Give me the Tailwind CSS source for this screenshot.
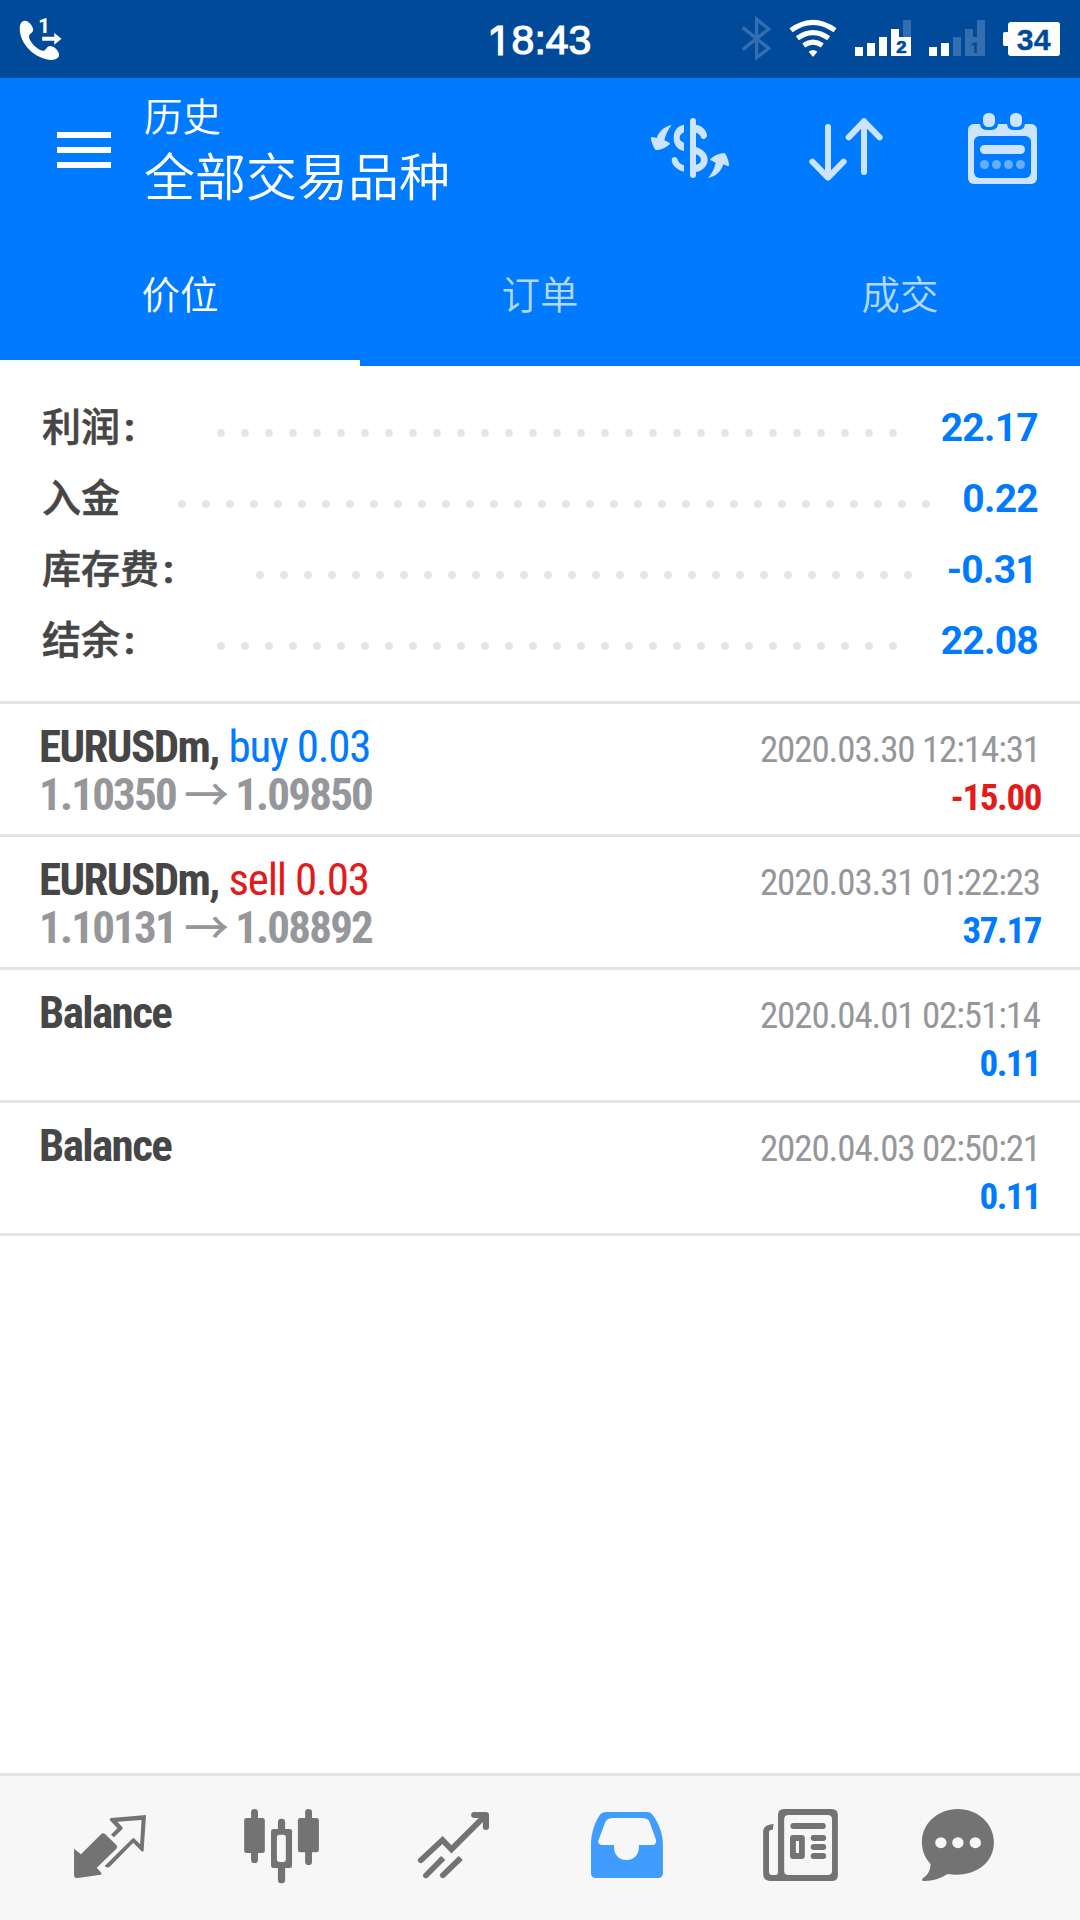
<!DOCTYPE html>
<html lang="zh-CN">
<head>
<meta charset="utf-8">
<title>历史</title>
<script src="https://cdn.jsdelivr.net/npm/@tailwindcss/browser@4"></script>
</head>
<body class="bg-white">
<div class="flex h-[1920px] w-[1080px] flex-col overflow-hidden bg-white font-['Roboto','Noto_Sans_CJK_SC',sans-serif] text-[#464646]">

  <!-- Status bar -->
  <header class="grid h-[78px] grid-cols-3 items-center bg-[#004a99] text-white">
    <svg class="ml-[18px] h-[48px] w-[48px]" viewBox="52 42 139 144" preserveAspectRatio="none" fill="#fff">
      <path d="M72 59C61 60 57 70 57 84C58 130 100 172 146 177C160 177 170 172 171 162C171 150 158 137 147 135C135 134 135 146 127 149C112 152 82 120 84 105C86 97 96 96 96 85C95 74 82 59 72 59Z"/>
      <path d="M122 107H157V96L178 113L157 131V119H122Z"/>
      <text x="111" y="96" font-family="Roboto" font-weight="800" font-size="59">1</text>
    </svg>
    <div class="flex justify-center pt-[3px] font-['Liberation_Sans',sans-serif] text-[41px] leading-none [-webkit-text-stroke:1.2px_#fff]"><span class="w-[23px] pl-px font-['Inter',sans-serif] text-[40px] leading-[41px]">1</span><span>8:43</span></div>
    <svg class="h-[78px] w-[360px]" viewBox="60 0 1080 234" fill="#fff">
      <path d="M128 82L206 145L170 173V58L206 87L128 149" fill="none" stroke="#336eae" stroke-width="10"/>
      <g fill="none" stroke="#fff" stroke-width="15">
        <path d="M273 91Q339 43 405 91"/>
        <path d="M292 115Q339 81 386 115"/>
        <path d="M311 136Q339 117 367 136"/>
      </g>
      <path d="M326 155Q339 145 352 155L341 169Q339 171 337 169Z"/>
      <path d="M609 60H633V111H609Z" fill="#336eae"/>
      <path d="M465 141H489V168H465ZM501 129H525V168H501ZM537 111H561V168H537ZM573 87H597V111H633V168H573Z"/>
      <text x="604" y="159" text-anchor="middle" fill="#004a99" stroke="#004a99" stroke-width="2" font-family="Liberation Sans" font-weight="700" font-size="47" textLength="31" lengthAdjust="spacingAndGlyphs">2</text>
      <path d="M687 141H711V168H687ZM723 129H747V168H723Z"/>
      <path d="M759 111H783V168H759ZM795 87H819V111H831V60H855V168H795Z" fill="#336eae"/>
      <text x="825" y="159" text-anchor="middle" fill="#004a99" font-family="Roboto" font-weight="800" font-size="46">1</text>
      <path d="M932 66H1072Q1080 66 1080 74V160Q1080 168 1072 168H932Q924 167 924 158V138H914Q909 138 909 133V101Q909 96 914 96H924V76Q924 67 932 66Z"/>
      <text x="1001" y="149" text-anchor="middle" fill="#004a99" stroke="#004a99" stroke-width="1" font-family="Liberation Sans" font-weight="700" font-size="87" textLength="101" lengthAdjust="spacingAndGlyphs">34</text>
    </svg>
  </header>

  <!-- App bar -->
  <section class="flex h-[288px] flex-col bg-[#007aff] text-white">
    <div class="flex h-[144px] shrink-0">
      <div class="mt-[54px] ml-[57px] flex h-[36px] w-[54px] flex-col justify-between">
        <i class="block h-[6px] bg-white"></i><i class="block h-[6px] bg-white"></i><i class="block h-[6px] bg-white"></i>
      </div>
      <div class="ml-[33px] pt-[12px] font-['Noto_Sans_CJK_SC',sans-serif] font-[350]">
        <div class="text-[38.5px] leading-[48px]">历史</div>
        <div class="text-[51px] leading-[72px]">全部交易品种</div>
      </div>
      <svg class="mt-[32px] mr-[40px] ml-auto h-[80px] w-[400px]" viewBox="60 60 1200 240" fill="#cce4ff">
        <rect x="210" y="84" width="18" height="180" rx="9"/>
        <path d="M192 104C170 108 161 125 161 143C161 162 170 178 192 183V158C183 154 179 150 179 143C179 136 184 131 192 127Z"/>
        <path d="M192 245C172 241 156 226 155 211C155 199 171 198 173 209C175 217 183 223 192 226Z"/>
        <path d="M228 104C246 107 260 120 261 136C261 148 245 151 243 141C241 135 236 131 228 128Z"/>
        <path d="M228 171C250 178 263 192 263 209C263 228 248 242 228 246V224C238 222 243 217 243 210C243 202 237 197 228 193Z"/>
        <path d="M155 105C132 110 117 124 110 144L98 141C94 140 92 143 93 147C95 158 99 167 104 176C106 180 109 181 114 180C127 179 140 172 149 163C150 161 150 160 148 158L133 151C137 134 144 118 155 105Z"/>
        <path d="M264 264C276 250 283 236 287 218L272 211C270 210 270 208 272 206C283 196 297 191 310 189C313 189 315 190 316 192C322 201 326 212 327 225C327 228 325 229 323 228L310 223C303 245 287 260 264 264Z"/>
        <path d="M624 111V262M577 215L624 263L671 215M732 246V94M686 142L732 94L779 142" fill="none" stroke="#cce4ff" stroke-width="18" stroke-linecap="round" stroke-linejoin="round"/>
        <rect x="1044" y="102" width="207" height="180" rx="17"/>
        <rect x="1062" y="138" width="171" height="126" rx="17" fill="#007aff"/>
        <path d="M1080 96H1134V100Q1134 120 1114 120H1100Q1080 120 1080 100ZM1161 96H1215V100Q1215 120 1195 120H1181Q1161 120 1161 100Z" fill="#007aff"/>
        <rect x="1089" y="69" width="36" height="42" rx="16"/>
        <rect x="1170" y="69" width="36" height="42" rx="16"/>
        <rect x="1080" y="165" width="135" height="27" rx="13.5"/>
        <g fill="#66afff"><circle cx="1093.500" cy="223.500" r="13.500"/><circle cx="1129.500" cy="223.500" r="13.500"/><circle cx="1165.500" cy="223.500" r="13.500"/><circle cx="1201.500" cy="223.500" r="13.500"/></g>
      </svg>
    </div>
    <nav class="grid h-[144px] grid-cols-3 text-center font-['Noto_Sans_CJK_SC',sans-serif] text-[38.5px] leading-[140px] font-[350] text-[#b3d7ff]">
      <div class="h-[144px] border-b-[6px] border-white text-white">价位</div>
      <div>订单</div>
      <div>成交</div>
    </nav>
  </section>

  <!-- Summary -->
  <section class="h-[338px] border-b-[3px] border-[#e5e5e5] pt-[27px] pr-[42px] pl-[42px] text-[39px] leading-[71px] font-bold">
    <div class="flex h-[71px]">
      <span class="w-[167px] font-medium [-webkit-text-stroke:0.6px_#464646]">利润<b class="ml-[4px]">:</b></span>
      <i class="mt-[28px] h-[24px] w-[696px] bg-[radial-gradient(circle,#e5e5e5_3.5px,transparent_4.5px)] bg-[length:24px_24px]"></i>
      <span class="ml-auto tracking-[-0.7px] text-[#007aff]">22.17</span>
    </div>
    <div class="flex h-[71px]">
      <span class="w-[128px] font-medium [-webkit-text-stroke:0.6px_#464646]">入金</span>
      <i class="mt-[28px] h-[24px] w-[768px] bg-[radial-gradient(circle,#e5e5e5_3.5px,transparent_4.5px)] bg-[length:24px_24px]"></i>
      <span class="ml-auto tracking-[-0.7px] text-[#007aff]">0.22</span>
    </div>
    <div class="flex h-[71px]">
      <span class="w-[206px] font-medium [-webkit-text-stroke:0.6px_#464646]">库存费<b class="ml-[4px]">:</b></span>
      <i class="mt-[28px] h-[24px] w-[672px] bg-[radial-gradient(circle,#e5e5e5_3.5px,transparent_4.5px)] bg-[length:24px_24px]"></i>
      <span class="ml-auto pr-px tracking-[-0.7px] text-[#007aff]">-0.31</span>
    </div>
    <div class="flex h-[71px]">
      <span class="w-[167px] font-medium [-webkit-text-stroke:0.6px_#464646]">结余<b class="ml-[4px]">:</b></span>
      <i class="mt-[28px] h-[24px] w-[696px] bg-[radial-gradient(circle,#e5e5e5_3.5px,transparent_4.5px)] bg-[length:24px_24px]"></i>
      <span class="ml-auto tracking-[-0.7px] text-[#007aff]">22.08</span>
    </div>
  </section>

  <!-- Deals -->
  <section class="flex-1 font-stretch-condensed">
    <article class="flex h-[133px] justify-between border-b-[3px] border-[#e5e5e5] pt-[19px] pr-[40px] pl-[39px] leading-[48px] whitespace-nowrap">
      <div class="text-[45px] font-bold">
        <div class="h-[48px] tracking-[-1.6px]">EURUSDm, <span class="ml-px font-normal tracking-[-1.2px] text-[#007aff]">buy 0.03</span></div>
        <div class="flex h-[48px] items-center gap-[8px] tracking-[-1.8px] text-[#96979b]"><span>1.10350</span><span class="-mt-[4px] font-['Noto_Sans_CJK_SC'] leading-[44px] font-medium">→</span><span>1.09850</span></div>
      </div>
      <div class="pt-[3px] text-right text-[37px]">
        <div class="tracking-[-1.1px] text-[#96979b]">2020.03.30 12:14:31</div>
        <div class="-mr-px font-bold tracking-[-1.4px] text-[#e21b1b]">-15.00</div>
      </div>
    </article>
    <article class="flex h-[133px] justify-between border-b-[3px] border-[#e5e5e5] pt-[19px] pr-[40px] pl-[39px] leading-[48px] whitespace-nowrap">
      <div class="text-[45px] font-bold">
        <div class="h-[48px] tracking-[-1.6px]">EURUSDm, <span class="ml-px font-normal tracking-[-1.2px] text-[#e21b1b]">sell 0.03</span></div>
        <div class="flex h-[48px] items-center gap-[8px] tracking-[-1.8px] text-[#96979b]"><span>1.10131</span><span class="-mt-[4px] font-['Noto_Sans_CJK_SC'] leading-[44px] font-medium">→</span><span>1.08892</span></div>
      </div>
      <div class="pt-[3px] text-right text-[37px]">
        <div class="tracking-[-1.1px] text-[#96979b]">2020.03.31 01:22:23</div>
        <div class="-mr-px font-bold tracking-[-1.4px] text-[#007aff]">37.17</div>
      </div>
    </article>
    <article class="flex h-[133px] justify-between border-b-[3px] border-[#e5e5e5] pt-[19px] pr-[40px] pl-[39px] leading-[48px] whitespace-nowrap">
      <div class="text-[45px] font-bold tracking-[-1.6px]">Balance</div>
      <div class="pt-[3px] text-right text-[37px]">
        <div class="tracking-[-1.1px] text-[#96979b]">2020.04.01 02:51:14</div>
        <div class="font-bold tracking-[-1.6px] text-[#007aff]">0.11</div>
      </div>
    </article>
    <article class="flex h-[133px] justify-between border-b-[3px] border-[#e5e5e5] pt-[19px] pr-[40px] pl-[39px] leading-[48px] whitespace-nowrap">
      <div class="text-[45px] font-bold tracking-[-1.6px]">Balance</div>
      <div class="pt-[3px] text-right text-[37px]">
        <div class="tracking-[-1.1px] text-[#96979b]">2020.04.03 02:50:21</div>
        <div class="font-bold tracking-[-1.6px] text-[#007aff]">0.11</div>
      </div>
    </article>
  </section>

  <!-- Tab bar -->
  <footer class="flex h-[147px] border-t-[3px] border-[#e5e5e5] bg-[#f7f7f7]">
    <svg class="h-[144px] w-[540px]" viewBox="0 48 1568 432" preserveAspectRatio="none" fill="#737373">
      <path d="M215 266L235 283L294 222Q299 217 305 222L338 255Q343 261 338 266L281 323L294 338Q297 342 292 344L226 354Q215 355 215 344Z"/>
      <path fill-rule="evenodd" d="M424 165L417 272Q416 277 411 274L387 248L320 319Q315 325 307 321L304 318L384 236Q387 232 391 236L407 253L411 180L341 185L355 201Q358 205 355 208L331 232L322 224L341 205L319 181Q317 175 323 174Z"/>
      <rect x="729" y="147" width="20" height="162" rx="10"/><rect x="709" y="174" width="60" height="105" rx="7"/>
      <rect x="886" y="147" width="20" height="168" rx="10"/><rect x="865" y="174" width="61" height="103" rx="7"/>
      <rect x="807" y="176" width="21" height="194" rx="10"/><rect x="787" y="207" width="61" height="117" rx="7"/>
      <rect x="804" y="224" width="26" height="82" rx="8" fill="#f7f7f7"/>
      <g fill="none" stroke="#737373" stroke-width="17" stroke-linecap="round">
        <path d="M1222 301L1285 240L1311 268L1408 168"/><path d="M1377 165H1411V201" stroke-width="18" stroke-linejoin="round"/>
        <path d="M1237 346L1280 301M1286 346L1331 301"/>
        <path d="M1280 301L1287 294M1331 301L1338 294" stroke-linecap="butt" stroke-width="17"/>
      </g>
    </svg>
    <svg class="h-[144px] w-[540px]" viewBox="0 48 1568 432" preserveAspectRatio="none" fill="#737373">
      <path fill="#409cff" fill-rule="evenodd" d="M194 156H312Q321 156 327 164C346 191 357 222 357 256V339Q357 354 342 354H163Q148 354 148 339V248C150 214 160 186 175 163Q181 156 194 156ZM212 174H296Q312 174 317 183L337 240Q338 255 327 255H287V264C286 287 271 300 251 300C231 300 216 286 215 264V255H181Q169 255 169 243L189 188Q194 174 212 174Z"/>
      <path fill-rule="evenodd" d="M709 147H847Q865 147 865 165V345Q865 363 847 363H667Q648 361 648 343V212Q650 194 678 192L676 209Q665 209 665 216V336Q665 345 674 345H684Q691 345 691 338V165Q691 147 709 147ZM722 165Q709 165 709 178V332Q709 345 722 345H835Q848 345 848 332V178Q848 165 835 165Z"/>
      <rect x="727" y="189" width="103" height="18" rx="9"/>
      <path fill-rule="evenodd" d="M735 225H760Q769 225 769 234V288Q769 297 760 297H735Q726 297 726 288V234Q726 225 735 225ZM743 243V279H752V243Z"/>
      <rect x="786" y="225" width="45" height="18" rx="9"/><rect x="786" y="252" width="45" height="18" rx="9"/><rect x="786" y="279" width="45" height="18" rx="9"/>
      <path d="M1213 147C1273 147 1318 192 1318 247C1318 310 1262 354 1184 342C1161 357 1138 364 1113 363Q1107 361 1110 356C1127 345 1134 330 1134 312C1117 293 1109 271 1109 246C1109 190 1156 147 1213 147Z"/>
      <g fill="#f7f7f7"><circle cx="1164" cy="248" r="16.500"/><circle cx="1213.500" cy="248" r="16.500"/><circle cx="1264" cy="248" r="16.500"/></g>
    </svg>
  </footer>
</div>
</body>
</html>
